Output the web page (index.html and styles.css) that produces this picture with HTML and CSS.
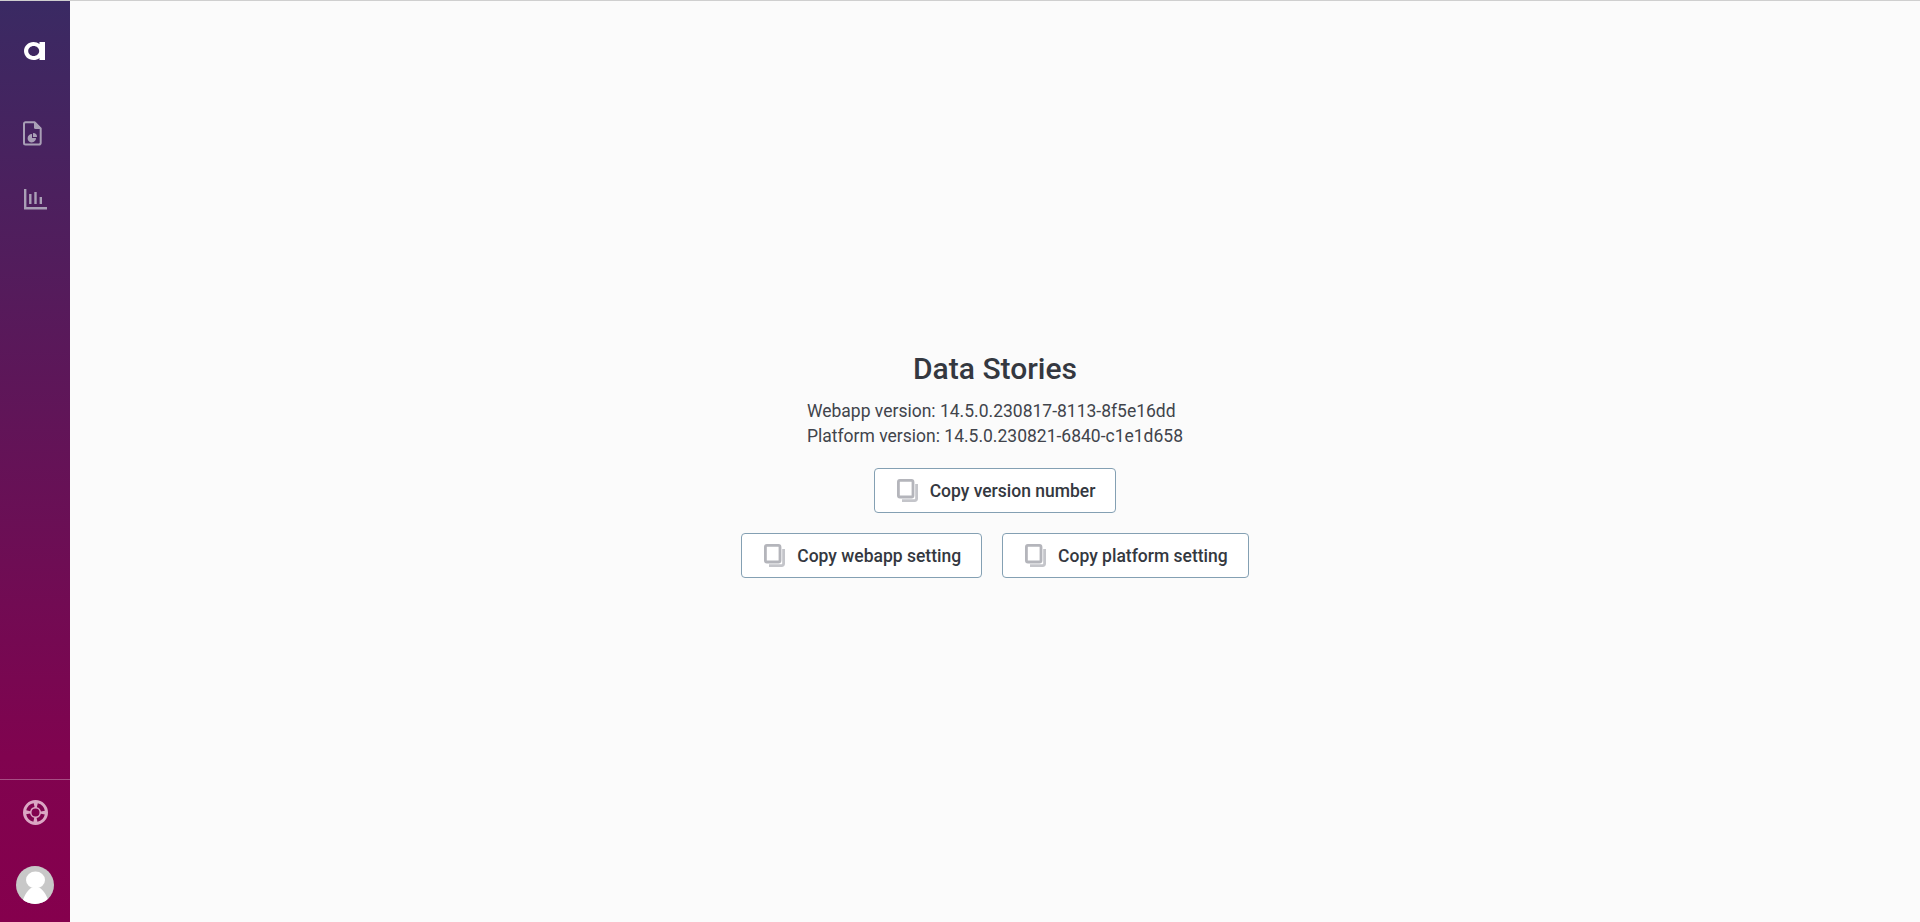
FILE: index.html
```html
<!DOCTYPE html>
<html lang="en">
<head>
<meta charset="utf-8">
<title>Data Stories</title>
<link rel="stylesheet" href="styles.css">
</head>
<body>
<div class="app">
  <nav class="sidebar">
    <div class="nav-top">
      <svg class="logo" viewBox="0 0 21 18" width="21" height="18"><path fill="#fff" fill-rule="evenodd" d="M9.500 0C4.200 0 0 4 0 9s4.200 9 9.500 9c2.300 0 4.400-.8 6-2.100V18H21V0h-5.500v2.100C13.900.8 11.800 0 9.500 0zm.2 4c3 0 5.500 2.200 5.500 5s-2.500 5-5.500 5-5.500-2.200-5.500-5 2.500-5 5.500-5z"/></svg>
      <svg class="nav-icon file" viewBox="0 0 19 25" width="19" height="25"><path fill="none" stroke="#a99fb6" stroke-width="2" stroke-linejoin="round" d="M2.500 1.200h9l6.200 6.300v14.300a1.800 1.800 0 0 1-1.800 1.800H2.500a1.500 1.500 0 0 1-1.500-1.500V2.700a1.500 1.500 0 0 1 1.500-1.500z"/><path fill="#a99fb6" d="M11 1h1.500l5.500 6v1h-5.500A1.500 1.500 0 0 1 11 6.500z"/><path fill="#a99fb6" d="M9 13v4h4a4.200 4.200 0 1 1-4-4z"/><path fill="#a99fb6" d="M10 12a4 4 0 0 1 4 4h-4z"/></svg>
      <svg class="nav-icon chart" viewBox="0 0 23 21" width="23" height="21"><g fill="none" stroke="#a99fb6" stroke-width="2.400"><path d="M1.200 0v19.300H23"/><path d="M6.300 5v10"/><path d="M11.500 3v12"/><path d="M16.800 8v7"/></g></svg>
    </div>
    <div class="nav-bottom">
      <svg class="help" viewBox="0 0 25 25" width="25" height="25"><circle cx="12.500" cy="12.500" r="8.250" fill="none" stroke="#dba7c4" stroke-width="8.500"/><circle cx="12.500" cy="12.500" r="7.500" fill="none" stroke="#80044f" stroke-width="4" stroke-dasharray="8.500 3.280" stroke-dashoffset="-1.640"/></svg>
      <svg class="avatar" viewBox="0 0 38 38" width="38" height="38"><defs><clipPath id="avatar-clip"><circle cx="19" cy="19" r="19"/></clipPath></defs><g clip-path="url(#avatar-clip)"><rect width="38" height="38" fill="#c8c8c8"/><ellipse cx="19.500" cy="14" rx="9.500" ry="8.500" fill="#fff"/><path fill="#fff" d="M6 38c1-7 5-13 9-16h9c4 3 8 9 9 16z"/></g></svg>
    </div>
  </nav>
  <main class="content">
    <h1 class="title">Data Stories</h1>
    <div class="versions">
      <div>Webapp version: 14.5.0.230817-8113-8f5e16dd</div>
      <div>Platform version: 14.5.0.230821-6840-c1e1d658</div>
    </div>
    <div class="row">
      <button class="btn"><svg class="copy" viewBox="0 0 21 23" width="21" height="23"><rect x="1.400" y="1.400" width="14.600" height="16.600" rx="1.500" fill="none" stroke="#b4b5bb" stroke-width="2.800"/><path fill="none" stroke="#c4c5ca" stroke-width="2.800" d="M19.600 5v14.600a2 2 0 0 1-2 2H5"/></svg>Copy version number</button>
    </div>
    <div class="row">
      <button class="btn"><svg class="copy" viewBox="0 0 21 23" width="21" height="23"><rect x="1.400" y="1.400" width="14.600" height="16.600" rx="1.500" fill="none" stroke="#b4b5bb" stroke-width="2.800"/><path fill="none" stroke="#c4c5ca" stroke-width="2.800" d="M19.600 5v14.600a2 2 0 0 1-2 2H5"/></svg>Copy webapp setting</button>
      <button class="btn"><svg class="copy" viewBox="0 0 21 23" width="21" height="23"><rect x="1.400" y="1.400" width="14.600" height="16.600" rx="1.500" fill="none" stroke="#b4b5bb" stroke-width="2.800"/><path fill="none" stroke="#c4c5ca" stroke-width="2.800" d="M19.600 5v14.600a2 2 0 0 1-2 2H5"/></svg>Copy platform setting</button>
    </div>
  </main>
</div>
</body>
</html>
```
FILE: styles.css
```css
* { box-sizing: border-box; }
html, body { height: 100%; }
body {
  margin: 0;
  background: #fbfbfb;
  border-top: 1px solid #cfcfcf;
  font-family: Roboto, "Liberation Sans", sans-serif;
  color: #2f3339;
  overflow: hidden;
}
.app { display: flex; height: 921px; }
.sidebar {
  width: 70px;
  flex: none;
  display: flex;
  flex-direction: column;
  justify-content: space-between;
  background: linear-gradient(180deg, #3a2a63 0%, #80034f 82%, #85004d 100%);
}
.nav-top { display: flex; flex-direction: column; align-items: center; padding-top: 41px; }
.logo { display: block; margin-left: -1px; }
.nav-icon { display: block; }
.file { margin-top: 61px; margin-left: -6px; }
.chart { margin-top: 43px; margin-right: -1px; }
.nav-bottom {
  display: flex;
  flex-direction: column;
  align-items: center;
  border-top: 1px solid rgba(255, 255, 255, .3);
  padding: 20px 0 18px;
}
.help { display: block; }
.avatar { display: block; margin-top: 41px; }
.content {
  flex: 1;
  display: flex;
  flex-direction: column;
  align-items: center;
  padding-top: 350px;
}
.title { margin: 0; font-size: 30px; line-height: 36px; font-weight: 500; color: #343840; }
.versions { margin-top: 12px; font-size: 17.5px; line-height: 24.5px; color: #41444b; }
.row { display: flex; gap: 20px; margin-top: 20px; }
.btn {
  height: 45px;
  display: flex;
  align-items: center;
  gap: 12px;
  padding: 0 20px 0 22px;
  background: #fff;
  border: 1px solid #84a0b3;
  border-radius: 4px;
  font-family: inherit;
  font-size: 17.5px;
  font-weight: 500;
  color: #343840;
}
.copy { display: block; flex: none; }
```
